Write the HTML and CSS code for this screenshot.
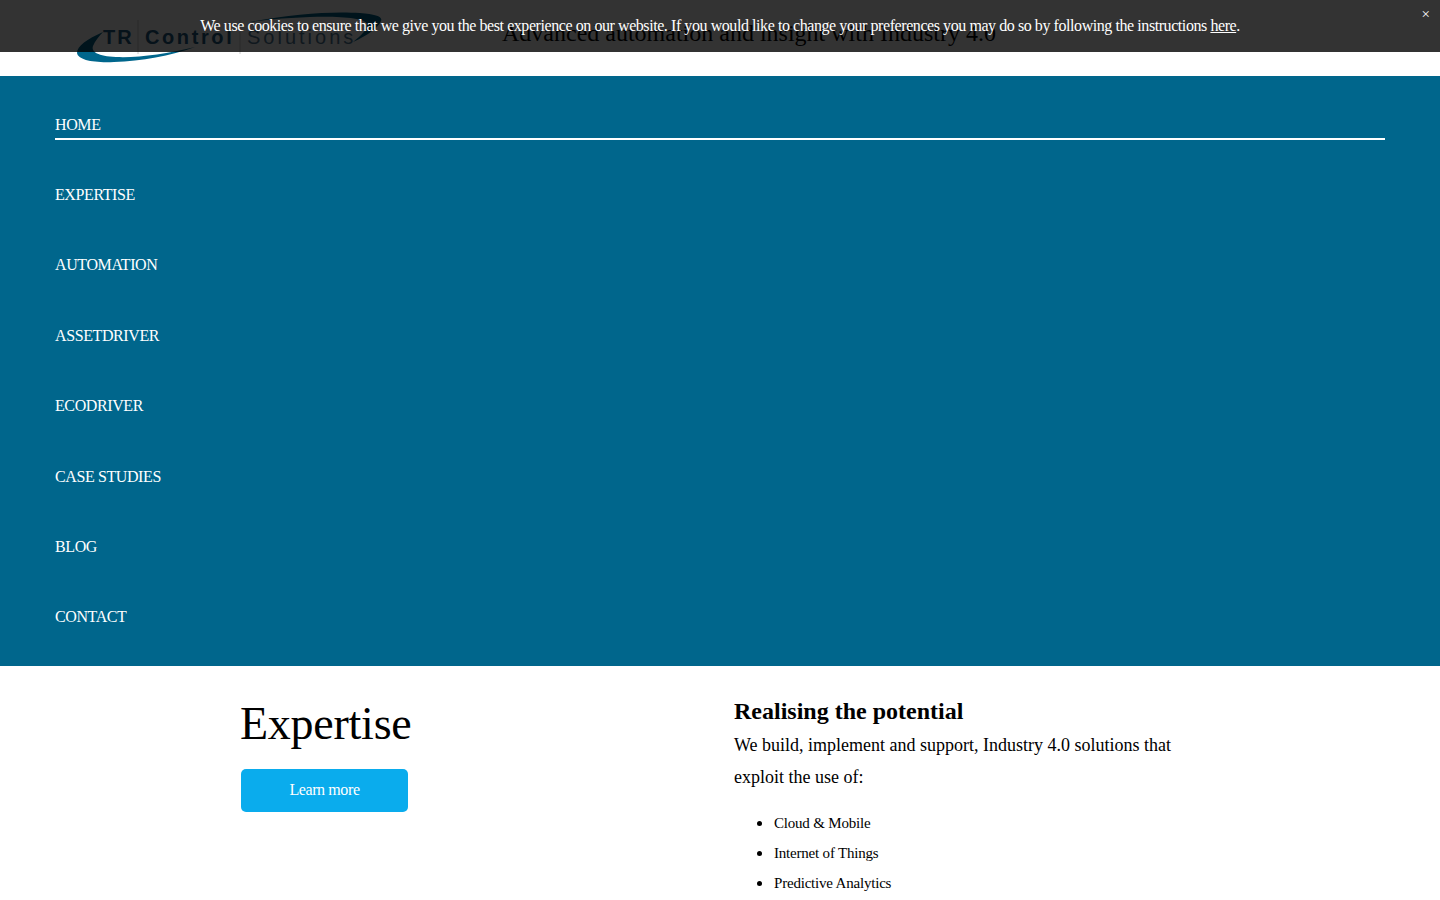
FILE: index.html
```html
<!DOCTYPE html>
<html lang="en">
<head>
  <meta charset="UTF-8">
  <meta name="viewport" content="width=device-width, initial-scale=1.0">
  <title>TR Control Solutions</title>
  <link rel="stylesheet" href="styles.css">
</head>
<body>
  <!-- Cookie notice -->
  <div class="cookie-bar">
    <p>We use cookies to ensure that we give you the best experience on our website. If you would like to change your preferences you may do so by following the instructions <a href="#">here</a>.</p>
    <button type="button" class="cookie-close">&times;</button>
  </div>

  <!-- Header -->
  <header class="site-header">
    <svg class="logo" width="320" height="76" viewBox="0 0 320 76" role="img" aria-label="TR Control Solutions">
      <path class="swoosh" d="M33 32 C17 39 7 46 7 53 C8 60 24 63 44 62 C72 61 100 56 125 47 C96 54 68 58 46 57 C28 56 21 52 23 46 C25 41 29 36 33 32 Z"/>
      <path class="swoosh" d="M180 22 C220 14 262 11 290 13 C306 14 313 17 311 21 C308 28 298 35 283 42 C292 35 298 29 297 24 C295 18 270 16 240 17 C220 18 200 19 180 22 Z"/>
      <line class="logo-rule" x1="68" y1="20" x2="68" y2="54"/>
      <line class="logo-rule" x1="170" y1="20" x2="170" y2="54"/>
      <text class="logo-tr" x="33" y="44">TR</text>
      <text class="logo-control" x="75" y="44">Control</text>
      <text class="logo-solutions" x="177" y="44">Solutions</text>
    </svg>
    <p class="tagline">Advanced automation and insight with Industry 4.0</p>
  </header>

  <!-- Navigation -->
  <nav class="main-nav">
    <a href="#" class="nav-item active"><span>HOME</span></a>
    <a href="#" class="nav-item"><span>EXPERTISE</span></a>
    <a href="#" class="nav-item"><span>AUTOMATION</span></a>
    <a href="#" class="nav-item"><span>ASSETDRIVER</span></a>
    <a href="#" class="nav-item"><span>ECODRIVER</span></a>
    <a href="#" class="nav-item"><span>CASE STUDIES</span></a>
    <a href="#" class="nav-item"><span>BLOG</span></a>
    <a href="#" class="nav-item"><span>CONTACT</span></a>
  </nav>

  <!-- Expertise -->
  <main class="expertise">
    <div class="expertise-left">
      <h1>Expertise</h1>
      <a href="#" class="btn">Learn more</a>
    </div>
    <div class="expertise-right">
      <h3>Realising the potential</h3>
      <p>We build, implement and support, Industry 4.0 solutions that exploit the use of:</p>
      <ul>
        <li>Cloud &amp; Mobile</li>
        <li>Internet of Things</li>
        <li>Predictive Analytics</li>
      </ul>
    </div>
  </main>
</body>
</html>
```

FILE: styles.css
```css
/* Global reset */
* {
  margin: 0;
  padding: 0;
  box-sizing: border-box;
}

html,
body {
  height: 900px;
  overflow: hidden;
}

body {
  font-family: 'Liberation Serif', 'Times New Roman', serif;
  background-color: #fff;
  color: #000;
}

/* Cookie notice */
.cookie-bar {
  position: absolute;
  top: 0;
  left: 0;
  width: 100%;
  height: 52px;
  padding-top: 17px;
  background-color: rgba(0, 0, 0, 0.8);
  color: #fff;
  font-size: 16px;
  letter-spacing: -0.43px;
  line-height: 18px;
  text-align: center;
}

.cookie-bar a {
  color: #fff;
}

.cookie-close {
  position: absolute;
  top: 5px;
  right: 10px;
  background: none;
  border: none;
  color: #fff;
  font-family: inherit;
  font-size: 15px;
  line-height: 18px;
  cursor: pointer;
}

/* Header */
.site-header {
  display: flex;
  align-items: flex-start;
  height: 76px;
  padding-left: 70px;
}

.logo {
  flex-shrink: 0;
}

.swoosh {
  fill: #00668c;
}

.logo-rule {
  stroke: #ccc;
  stroke-width: 1;
}

.logo-tr,
.logo-control,
.logo-solutions {
  font-family: 'Liberation Sans', Arial, sans-serif;
  font-size: 20px;
  fill: #1f5a80;
}

.logo-tr {
  font-weight: bold;
  letter-spacing: 2px;
}

.logo-control {
  font-weight: bold;
  letter-spacing: 2.6px;
}

.logo-solutions {
  fill: #4f7a98;
  letter-spacing: 3px;
}

.tagline {
  margin-left: 112px;
  padding-top: 18px;
  font-size: 24px;
  line-height: 30px;
  color: #000;
}

/* Navigation */
.main-nav {
  display: flex;
  flex-direction: column;
  height: 590px;
  padding: 29.6px 55px 0;
  background-color: #00668c;
}

.nav-item {
  display: block;
  flex: none;
  height: 70.4px;
  color: #fff;
  font-size: 16px;
  letter-spacing: -0.4px;
  line-height: 18px;
  text-decoration: none;
}

.nav-item span {
  display: block;
  height: 34.4px;
  padding-top: 10px;
}

.nav-item.active span {
  border-bottom: 2px solid #fff;
}

/* Expertise */
.expertise {
  display: flex;
  padding: 30px 0 0 240px;
}

.expertise-left {
  width: 494px;
}

.expertise-left h1 {
  font-size: 46px;
  font-weight: normal;
  letter-spacing: -0.25px;
  line-height: 55px;
  margin-bottom: 18px;
}

.btn {
  display: block;
  width: 167px;
  height: 43px;
  margin-left: 1px;
  background-color: #0aaced;
  border-radius: 5px;
  color: #fff;
  font-size: 16px;
  letter-spacing: -0.4px;
  line-height: 42px;
  text-align: center;
  text-decoration: none;
}

.expertise-right {
  width: 450px;
}

.expertise-right h3 {
  font-size: 24px;
  line-height: 30px;
}

.expertise-right p {
  font-size: 18px;
  line-height: 32px;
  margin-top: 3px;
}

.expertise-right ul {
  margin-top: 14px;
  padding-left: 40px;
  font-size: 15px;
  letter-spacing: -0.2px;
  line-height: 30px;
}

.expertise-right li {
  height: 30px;
}

.expertise-right li::marker {
  font-size: 18px;
}
```
